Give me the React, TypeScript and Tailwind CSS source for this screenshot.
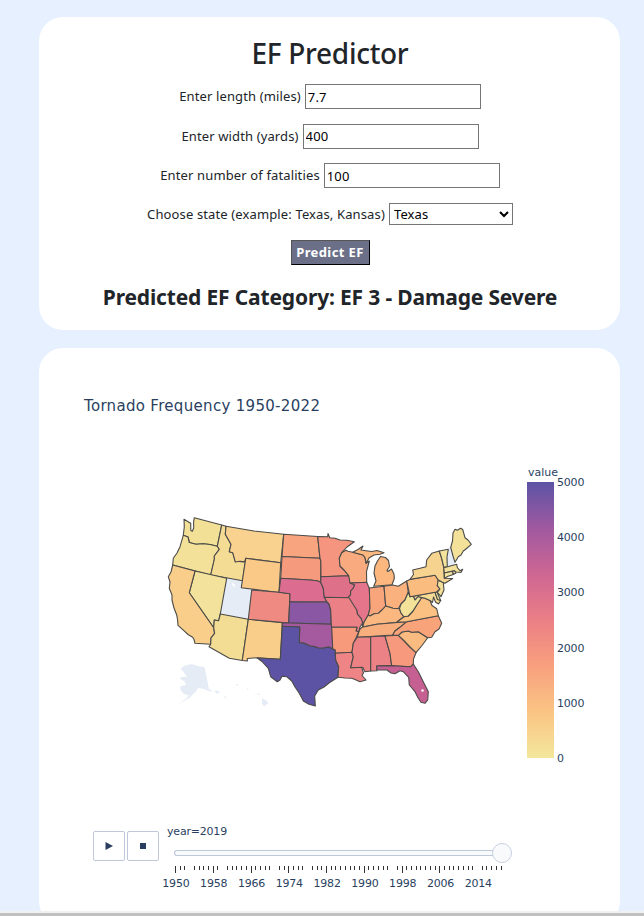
import React from "react";

type Region = { id: string; fill: string; d: string };

const regions: Region[] = [
  { id: "WA", fill: "#f2e096", d: "194.3,517.7 221.7,525 217.3,546.3 210,544.5 203.3,543.8 196,544.2 189.3,542.5 188,537 183.3,535.3 184.3,526.7 184,519.3 190.7,523.3 190.8,530.5 192.3,531.3 193.7,528 193.6,522" },
  { id: "OR", fill: "#f3e19a", d: "183.3,535.3 188,537 189.3,542.5 196,544.2 203.3,543.8 210,544.5 217.3,546.3 219.3,549.3 214.3,556 214.4,559 210.7,575 172.7,565 173.3,558.3 177,553 180,546.7" },
  { id: "ID", fill: "#f4dc95", d: "221.7,525 226,526.3 225.3,534.3 231,544.3 229.3,551.7 232.7,552.7 235.3,561 243.3,562 245.5,560.5 242.7,580.8 210.7,575 214.4,559 214.3,556 219.3,549.3 217.3,546.3" },
  { id: "MT", fill: "#f8d28e", d: "226,526.3 254,531 283.7,534.3 280.7,562.7 245.7,558.3 244.6,561.8 240,561.2 235.3,562 232.7,552.7 229.3,551.7 231,544.3 225.3,534.3" },
  { id: "WY", fill: "#fac887", d: "245.7,558.3 280.7,562.7 279,592.5 241.3,587.7" },
  { id: "NV", fill: "#f3e29b", d: "195,571 226.7,578.3 220.3,614 218.7,620.7 214.3,620 213.7,627.7 189.3,592.7" },
  { id: "CA", fill: "#f8ce8a", d: "172.7,565 195,571 189.3,592.7 213.7,627.7 214.6,633.3 211,638 210.7,644.3 195,643.3 194,639.5 192.7,637.3 188,634.5 185,631.7 178,625.3 177.6,620 176.7,615 174,608 172,600 172,595 169.3,588.3 170,582 168.3,576.7 171,572" },
  { id: "AZ", fill: "#f3dc93", d: "220.3,614 248.3,619.3 242.3,660.5 229.3,658.3 209,646.7 210.7,644.3 211,638 214.6,633.3 213.7,627.7 214.3,620 218.7,620.7" },
  { id: "NM", fill: "#f9ce8a", d: "248.3,619.3 282.3,622.7 280.3,659.3 257.3,657.7 247.3,658.5 247.3,661 242.3,660.5" },
  { id: "CO", fill: "#ee8a82", d: "251.7,590 279,592.3 290,593.7 288.7,623 248.3,619.3" },
  { id: "ND", fill: "#f8a47e", d: "283.7,534.3 317.7,536.5 318.8,547 320,558.3 282,556.5" },
  { id: "SD", fill: "#f69a7e", d: "282,556.5 320,558.3 320.8,561 320.7,582.3 317,580.8 310,580 280.7,578.3" },
  { id: "NE", fill: "#dc6d90", d: "280.7,578.3 310,580 317,580.8 320.7,582.3 323.3,588.3 324.3,596.7 327,602 289.7,601.7 290,593.7 279,592.3" },
  { id: "KS", fill: "#8957a4", d: "289.7,601.7 327,602 329,604 330.7,610 331.3,624.3 288.7,623" },
  { id: "OK", fill: "#a5599f", d: "282.3,622.7 331.3,624.3 332.3,633.3 332.7,648.7 328.3,647 323,648.2 318.3,648 314,646.5 310,646 304,643.3 299.3,642.7 299.7,627 282.3,626.3" },
  { id: "TX", fill: "#5c53a5", d: "282.3,626.3 299.7,627 299.3,642.7 304,643.3 310,646 314,646.5 318.3,648 323,648.2 328.3,647 335.3,650 335.7,660 338.7,666.7 338,677.3 329.3,682.7 324,687 318.3,690 314.7,696 315.3,706 309,704.3 303.3,701 299.3,693.3 295,687 291.7,681 286.7,676.7 282,676.3 280,680 277.3,681.7 270.7,676.7 268.3,668.3 262,661.5 257.3,658 280.3,659.3" },
  { id: "MN", fill: "#f5957f", d: "317.7,536.5 327.7,536.7 328,533.5 329.7,537.7 335,538.3 340,540 347,540.3 354.3,541.7 347,547 341.7,552.7 339.3,558.3 340,566 344,570 348.7,575.7 321,576.7 320.8,561 320,558.3 318.8,547" },
  { id: "IA", fill: "#df7089", d: "321,576.7 348.7,575.7 350,580 354.7,585 353,588.5 350.7,591 350.5,595 349,597.8 324.3,597.3 323.3,588.3 320.7,582.3" },
  { id: "WI", fill: "#faaa7f", d: "341.7,552.7 346,550.2 348,551.2 352.7,552.3 363,555 365,557.5 366,563.3 369.3,561 366.5,571.7 366.7,582.3 350,583 348.7,575.7 344,570 340,566 339.3,558.3" },
  { id: "MI-U", fill: "#fbb77e", d: "352.7,552.3 358,549.5 363,546 361,550 366,550.7 371.7,551.5 377,550.5 384,552.8 380,554.3 374,555 369,558 366.3,563.3 365,557.5 363,555" },
  { id: "MI-L", fill: "#fbb77e", d: "380.5,556.5 385.5,557.5 388.5,560.5 389.5,566.5 387,570.5 388,571.5 391.5,569 394,574 394.3,578.5 392,584.8 373.7,586.3 376,581 374,573 375,566 377.5,561" },
  { id: "IL", fill: "#e4758a", d: "350,583 366.7,582.3 369.3,588.3 370,608.3 368.3,615 364,622.3 362.7,626.7 361,618.3 357.3,614 356.7,610 348.8,600.5 348.3,597 350.5,595 350.7,591 353,588.5 354.7,585" },
  { id: "IN", fill: "#f9a57c", d: "369.3,588 384,586.2 385.7,606 382,610 378.3,613.3 374,613.7 370,616 368.3,615 370,608.3" },
  { id: "OH", fill: "#fab17e", d: "384,586.2 392.7,585 398.3,586.3 406.7,581 408.3,592.3 405,600 401,604 398.3,608.7 393,608.2 385.7,606" },
  { id: "KY", fill: "#fab77f", d: "385.7,606 393,608.2 399.5,608.7 401,613 404,616.8 396.7,622.3 376.7,624.3 362.7,627 364,622.3 368.3,615 370,616 374,613.7 378.3,613.3 382,610" },
  { id: "TN", fill: "#f9ae7d", d: "362,627.2 376.7,624.3 406.7,621.7 400,627.3 395,631 392.7,635 357.3,637.3 359.3,630" },
  { id: "MO", fill: "#eb8087", d: "324.3,597.3 349,597.8 356.7,610 357.3,614 361,618.3 362.7,622.7 360,627 358.7,631.7 356,631 357,627.3 331.7,627.3 331.3,624.3 330.7,610 329,604 327,602" },
  { id: "AR", fill: "#f79a7c", d: "331.7,627.3 357,627.3 356,631 358.7,631.7 356,638 353.3,643.3 352,652.3 335.3,653.3 335.3,650 332.7,648.7" },
  { id: "LA", fill: "#ee8485", d: "335.3,653.3 352,652.3 353.3,656.7 350.7,667.7 361.7,667.3 363.5,673 362,675.5 366,680 360,681.7 355,679.5 351.7,678.3 345,678 338,677.3 338.7,666.7 335.7,660" },
  { id: "MS", fill: "#ed8285", d: "357.3,637.3 370.7,636.7 370.7,671 365,671.7 362.7,667.3 350.7,667.7 353.3,656.7 352,652.3 353.3,643.3" },
  { id: "AL", fill: "#ec8186", d: "370.7,636.7 385,636 390,653.3 391.7,665.3 376.7,666 377,670.7 370.7,671" },
  { id: "GA", fill: "#f6997d", d: "385,636 398.3,635.3 403.3,640 410,647 416,652.7 413.5,659 413.3,664 411.7,666.7 391.7,666 390,653.3" },
  { id: "FL", fill: "#c76092", d: "376.7,666 391.7,665.6 410.7,666.7 413.3,664 418.3,671.7 424,683.3 428.3,691.7 427.7,700 425,703.3 421,702.3 418.3,698.3 415,691.7 409.3,685 408.7,677.3 403.3,671.7 400,670.7 395,673.8 391,673 387,670 377,670" },
  { id: "SC", fill: "#fabb80", d: "398.3,635.3 402,632 408.3,631 411.7,632.3 418.3,631.7 427.7,637.7 422,645.5 416,652.7 410,647 403.3,640" },
  { id: "NC", fill: "#f9a37b", d: "406.7,621.7 438.3,615.7 441.7,623.3 439,629 435,631.7 431.7,637.3 427.7,637.7 418.3,631.7 411.7,632.3 408.3,631 402,632 398.3,635.3 392.7,635 395,631 400,627.3" },
  { id: "VA", fill: "#fbc182", d: "396.7,622.3 404,616.8 408.3,616 413,611 416.7,605 421.7,597.5 425,598.3 430,600.5 432,605.5 436.7,608.7 438.3,615.7 406.7,621.7" },
  { id: "WV", fill: "#f3e39a", d: "408.3,592.3 410,596.7 413.5,596.2 415,599.8 418,596.5 421.7,597.5 416.7,605 413,611 408.3,616 404,616.8 401,613 399.5,608.7 401,604 405,600" },
  { id: "MD", fill: "#f5db94", d: "413.5,596.2 435,592.3 437.5,599 440.7,600.5 438.5,604 435.5,602 433.5,597 432.5,602.5 430,600.5 425,598.3 421.7,597.5 418,596.5 415,599.8" },
  { id: "DE", fill: "#f3e49b", d: "435,592.3 437,591.7 438.5,595.5 440.7,600.5 437.5,599.5" },
  { id: "PA", fill: "#fbbc80", d: "406.7,581 410,579.5 435,575.3 438.3,580 437.3,585.7 440,589 436.5,592 410,596.7" },
  { id: "NJ", fill: "#f4df98", d: "438,580.5 443.3,582.3 444,590 441,596.7 437.3,592.3 440,589 437.3,585.7" },
  { id: "NY", fill: "#f6d48f", d: "410,579.3 413.5,574.5 412.7,570 420,568.3 426,566.7 426.7,560 431.7,553.3 439.3,551 441.7,558.3 443.8,567.3 444.3,578.3 452.7,578.5 445,583.3 442,582 438.3,580 435,575.3" },
  { id: "VT", fill: "#f3e39b", d: "439.3,551 448.3,549.3 447,557 447.3,566.7 443.8,567.3 441.7,558.3" },
  { id: "ME", fill: "#f3e199", d: "450.7,547.5 452.5,541 453,533 455,529.3 457.3,530.3 460.7,528.3 462.7,529.5 465,537.7 468,540 471.3,544.3 466,549 463.3,551 461,555 458.3,556.7 455,562.3 453,556" },
  { id: "MA", fill: "#f3e199", d: "443.8,567.7 454,565 456.7,564.3 457.3,567.5 460,570.7 462.7,569.3 461,572.5 456,572 454,570.7 444.3,573" },
  { id: "CT", fill: "#f3e49b", d: "444.3,573 452.7,571.2 453.2,574.5 448,576.3 444.5,578.3" },
  { id: "RI", fill: "#f3e49b", d: "452.7,571.2 454.5,570.8 456,573 453.2,574.5" },
];

const blankRegions: string[] = [
  "226.7,578.3 242.7,580.8 241.3,587.7 251.7,590 248.3,619.3 220.3,614",
  "448.3,549.3 450,545.7 453,556 455,564.3 447.3,566.7 447,557",
  "180.5,668.5 185,665.5 191.7,664 198,666 204.6,667 209,689.3 213,691 210,691.5 204,689 198,688 196,691.5 193,694 190,697.5 184,701 178,704.5 186,698.5 189,695.5 184,694 180.5,690.5 180,686.5 186,685 185,682 180,678.5 181,677 187,676.7 183,671",
  "214,691 217,690.5 220,693 217,693.5",
  "223,695.5 227,697.5 225,698",
  "262,698.5 266.5,700.5 268.5,703 264,706.5 262,703.5",
  "236,684 238.5,684.5 237,686",
  "247,688 249,689 247.5,690",
  "257,693 260.5,694.5 258,695",
];

function TornadoMap() {
  return (
    <svg className="block h-[210px] w-[320px] shrink-0" viewBox="160 505 320 210">
      {blankRegions.map((d) => (
        <polygon key={d} points={d} fill="#e5ecf6" />
      ))}
      <g stroke="#4a4a48" strokeWidth="1.1" strokeLinejoin="round">
        {regions.map((r) => (
          <polygon key={r.id} points={r.d} fill={r.fill} />
        ))}
      </g>
      <path d="M232 583l2.500 1 .5 3.500-2.500-2z" fill="#fff" />
      <circle cx="422.500" cy="690.500" r="1.200" fill="#fff" />
    </svg>
  );
}

const scaleLabels = ["5000", "4000", "3000", "2000", "1000", "0"];

function ColorScale() {
  return (
    <div className="ml-[47px] w-[70px] text-[11px] tracking-[-0.2px]">
      <div className="h-[22px] pl-px leading-[24px] tracking-normal">value</div>
      <div className="flex h-[276px]">
        <div className="-mt-px h-[276px] w-[27px] bg-[linear-gradient(to_top,#f3e79b,#fac484,#f8a07e,#eb7f86,#ce6693,#a059a0,#5c53a5)]" />
        <div className="-mt-2 ml-[3px] flex h-[292px] flex-col justify-between">
          {scaleLabels.map((label) => (
            <div key={label} className="h-4 leading-4">{label}</div>
          ))}
        </div>
      </div>
    </div>
  );
}

const skipped = [1953, 1960, 1971, 1978, 1996, 2014];
const years = Array.from({ length: 70 }, (_, i) => 1950 + i);
const labelYears = [1950, 1958, 1966, 1974, 1982, 1990, 1998, 2006, 2014];

function YearSlider() {
  return (
    <div className="ml-[7px] w-[346px] text-[11px]">
      <div className="h-4 pl-px leading-[18px] tracking-[-0.2px]">year=2019</div>
      <div className="mt-1 ml-2 flex h-5 items-center">
        <div className="h-[6px] w-[319px] rounded-l-full border border-r-0 border-[#bec8d9] bg-[#f8fafc]" />
        <div className="-ml-px h-5 w-5 rounded-full border border-[#c8d0e0] bg-[#f8fafc]" />
      </div>
      <div className="mt-[3px] ml-[9px] flex h-[7px] w-[327px] justify-between">
        {years.map((y) => (
          <span
            key={y}
            className={
              skipped.includes(y)
                ? "w-px"
                : (y - 1950) % 8 === 0
                  ? "h-[7px] w-px bg-[#333]"
                  : "h-1 w-px bg-[#333]"
            }
          />
        ))}
      </div>
      <div className="mt-[3px] -ml-[9px] flex h-4 w-[341px] tracking-[-0.2px]">
        {labelYears.map((y) => (
          <span key={y} className="w-[37.8px] shrink-0 text-center leading-4">{y}</span>
        ))}
      </div>
    </div>
  );
}

function NumberRow({ label, value }: { label: string; value: string }) {
  return (
    <label className="mb-[14.5px] flex h-[25px] items-center gap-1">
      <span className="pt-px">{label}</span>
      <input
        className="h-[25px] w-[176px] border border-[#767676] bg-white px-[2px] text-black outline-none"
        defaultValue={value}
      />
    </label>
  );
}

export default function App() {
  return (
    <div className="h-[916px] w-[644px] overflow-hidden bg-[#e6f0ff]">
      <main className="h-[911px] overflow-hidden pt-[17px] pl-[39px]">
        <section className="flex h-[313px] w-[581px] flex-col items-center rounded-[24px] bg-white pl-px font-['Noto_Sans',sans-serif] text-[13px] tracking-[0.13px] text-[#212529]">
          <h1 className="mt-[17px] mb-[13px] h-[37px] text-[28px] leading-[38px] font-medium tracking-[-0.3px]">EF Predictor</h1>
          <NumberRow label="Enter length (miles)" value="7.7" />
          <NumberRow label="Enter width (yards)" value="400" />
          <NumberRow label="Enter number of fatalities" value="100" />
          <label className="flex h-[22px] items-center gap-1">
            <span className="pt-[3px]">Choose state (example: Texas, Kansas)</span>
            <select className="h-[22px] w-[124px] border border-[#767676] bg-white text-black" defaultValue="Texas">
              <option>Texas</option>
              <option>Kansas</option>
            </select>
          </label>
          <button className="mt-[15px] h-[25px] w-[79px] border border-t-[#555] border-r-black border-b-black border-l-[#555] bg-[#6b6f87] text-[13px] leading-[23px] font-bold tracking-[0.4px] whitespace-nowrap text-white">
            Predict EF
          </button>
          <h2 className="mt-[17px] text-[21px] leading-[30px] font-bold tracking-[-0.16px] whitespace-nowrap">
            Predicted EF Category: EF 3 - Damage Severe
          </h2>
        </section>

        <section className="mt-[18px] h-[577px] w-[581px] rounded-[24px] bg-white pt-[46px] font-['DejaVu_Sans',sans-serif] text-[#2a3f5f]">
          <h3 className="ml-[45px] h-6 text-[15px] leading-6 tracking-[0.31px] whitespace-nowrap">Tornado Frequency 1950-2022</h3>
          <div className="mt-[43px] ml-[121px] flex h-[301px]">
            <div className="pt-11">
              <TornadoMap />
            </div>
            <ColorScale />
          </div>
          <div className="mt-[61px] ml-[54px] flex">
            <div className="mt-2 flex gap-[2px]">
              <button className="flex h-[30px] w-8 items-center justify-center rounded-[2px] border border-[#bec8d9]">
                <svg className="h-2 w-2" viewBox="0 0 8 8" fill="#2a3f5f"><path d="M.5 0L8 4L.5 8Z" /></svg>
              </button>
              <button className="flex h-[30px] w-8 items-center justify-center rounded-[2px] border border-[#bec8d9]">
                <span className="h-[6px] w-[6px] bg-[#2a3f5f]" />
              </button>
            </div>
            <YearSlider />
          </div>
        </section>
      </main>
      <div className="h-[2px] bg-[#f1f1f1]" />
      <div className="h-[3px] bg-[#c1c1c1]" />
    </div>
  );
}
